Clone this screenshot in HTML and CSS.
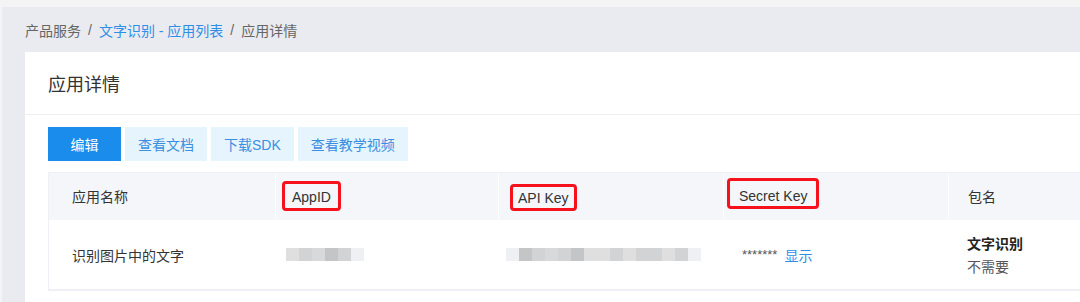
FILE: index.html
```html
<!DOCTYPE html>
<html lang="zh-CN">
<head>
  <meta charset="UTF-8">
  <title>应用详情</title>
  <link rel="stylesheet" href="styles.css">
</head>
<body>

  <div class="topbar"></div>

  <div class="main">
    <div class="side"></div>

    <div class="content">
      <div class="crumbs">
        <span>产品服务</span>
        <span class="sep">/</span>
        <a href="#">文字识别 - 应用列表</a>
        <span class="sep">/</span>
        <span>应用详情</span>
      </div>

      <div class="card">
        <div class="card-head">应用详情</div>

        <div class="card-body">
          <div class="tools">
            <button class="btn primary">编辑</button>
            <button class="btn">查看文档</button>
            <button class="btn">下载SDK</button>
            <button class="btn">查看教学视频</button>
          </div>

          <div class="table">
            <div class="row head">
              <div class="cell first">应用名称</div>
              <div class="cell"><span class="mark mark-id">AppID</span></div>
              <div class="cell"><span class="mark mark-api">API Key</span></div>
              <div class="cell"><span class="mark mark-secret">Secret Key</span></div>
              <div class="cell">包名</div>
            </div>
            <div class="row">
              <div class="cell first">识别图片中的文字</div>
              <div class="cell">
                <div class="blur id">
                  <i class="b1"></i><i class="b2"></i><i class="b3"></i><i class="b4"></i><i class="b2"></i><i class="b5"></i>
                </div>
              </div>
              <div class="cell">
                <div class="blur key">
                  <i class="b5"></i><i class="b4"></i><i class="b2"></i><i class="b3"></i><i class="b2"></i><i class="b4"></i><i class="b1"></i><i class="b1"></i><i class="b2"></i><i class="b1"></i><i class="b2"></i><i class="b2"></i><i class="b1"></i><i class="b2"></i><i class="b5"></i>
                </div>
              </div>
              <div class="cell secret">
                <span class="stars">*******</span>
                <a href="#">显示</a>
              </div>
              <div class="cell pkg">
                <b>文字识别</b>
                <span>不需要</span>
              </div>
            </div>
          </div>
        </div>
      </div>
    </div>
  </div>

</body>
</html>
```

FILE: styles.css
```css
body {
  margin: 0;
  font-family: "Liberation Sans", "Noto Sans CJK SC", sans-serif;
  font-size: 14px;
  color: #333;
  background: #e9ebf0;
  overflow: hidden;
}

.topbar {
  height: 7px;
  background: #f4f4f5;
}

.main {
  display: flex;
  height: 295px;
}

.side {
  width: 2px;
  background: #f3f4f7;
}

.content {
  flex: 1;
  padding-left: 23px;
  min-width: 0;
}

.crumbs {
  height: 45px;
  display: flex;
  align-items: center;
  gap: 7px;
  color: #666;
  white-space: nowrap;
}

.crumbs a {
  color: #2d8fe8;
  text-decoration: none;
}

.card {
  background: #fff;
  width: 1100px;
  height: 250px;
}

.card-head {
  height: 62px;
  padding-left: 23px;
  display: flex;
  align-items: center;
  font-size: 18px;
  color: #333;
  border-bottom: 1px solid #eceef2;
}

.card-body {
  padding: 12px 0 0 23px;
}

.tools {
  display: flex;
  gap: 4px;
  margin-bottom: 11px;
}

.btn {
  height: 34px;
  padding: 0 13px;
  border: none;
  background: #e6f4fe;
  color: #3b8fe0;
  font-family: inherit;
  font-size: 14px;
  cursor: pointer;
}

.btn.primary {
  width: 73px;
  background: #1a8cec;
  color: #fff;
}

.table {
  border: 1px solid #eef0f5;
  border-right: none;
}

.row {
  display: grid;
  grid-template-columns: 226px 223px 225px 225px 1fr;
  height: 69px;
  border-bottom: 1px solid #eef0f5;
}

.row.head {
  height: 46px;
  background: #f4f6fa;
  border-bottom: 1px solid #f4f6fa;
}

.cell {
  display: flex;
  align-items: center;
  padding-left: 19px;
  border-left: 1px solid #fff;
  white-space: nowrap;
}

.row:not(.head) .cell {
  border-left: none;
}

.cell.first {
  padding-left: 23px;
  border-left: none;
}

.mark {
  border: 3px solid #f5121c;
  border-radius: 4px;
  color: #333;
  line-height: 20px;
}

.mark-id {
  margin-left: -13px;
  padding: 3px 7px 1px;
}

.mark-api {
  margin-left: -8px;
  padding: 1px 5px 0;
  margin-top: 2px;
}

.mark-secret {
  margin-left: -16px;
  padding: 5px 9px 0;
  margin-top: -5px;
}

.blur {
  display: flex;
  height: 13px;
}

.blur i {
  width: 13px;
  height: 13px;
}

.blur.id {
  margin-left: -8px;
}

.blur.key {
  margin-left: -11px;
}

.b1 { background: #dfdfdf; }
.b2 { background: #d2d3d4; }
.b3 { background: #d8d9da; }
.b4 { background: #c4c5c6; }
.b5 { background: #eef0f3; }

.secret {
  gap: 7px;
}

.stars {
  color: #555;
  font-size: 13px;
}

.secret a {
  color: #2d8fe8;
  text-decoration: none;
}

.pkg {
  flex-direction: column;
  align-items: flex-start;
  justify-content: center;
  gap: 3px;
}

.pkg b {
  color: #222;
}

.pkg span {
  color: #555;
}
```
